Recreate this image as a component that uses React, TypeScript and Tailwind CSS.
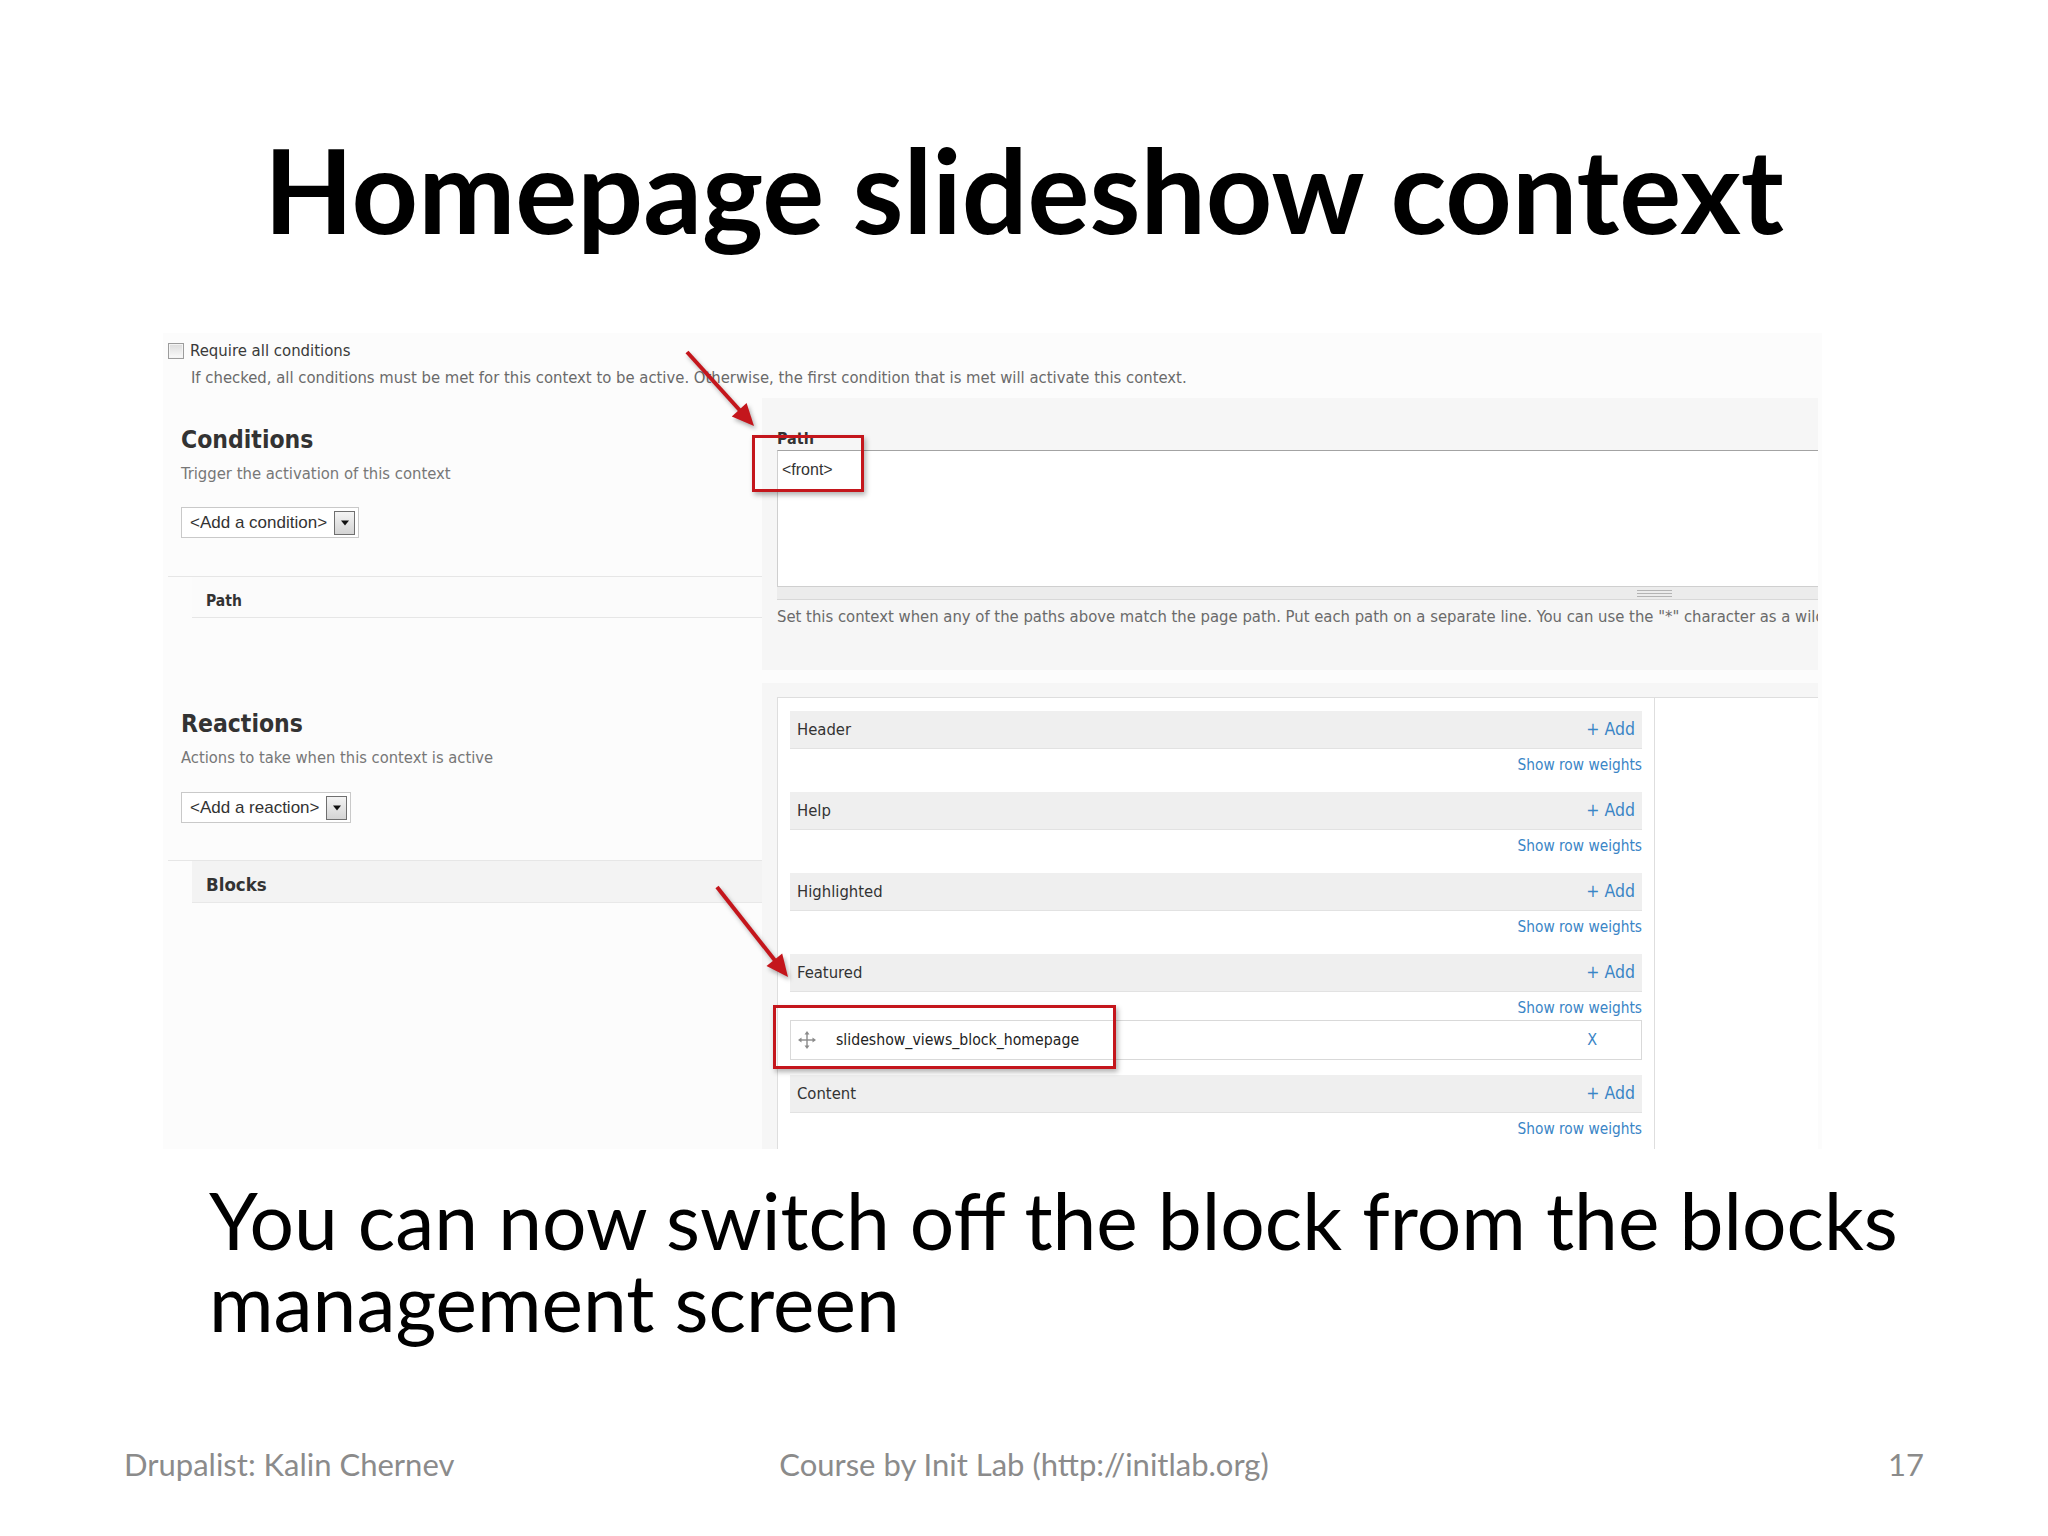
import React from "react";

const SS = "font-['DejaVu_Sans_Condensed','DejaVu_Sans',sans-serif]";
const AR = "font-['Liberation_Sans',Arial,sans-serif]";

function Checkbox() {
  return (
    <div className="h-[16px] w-[16px] border border-[#9c9c9c] bg-gradient-to-b from-[#dcdcdc] to-[#fafafa] shadow-[inset_0_0_0_1px_#f4f4f4]" />
  );
}

function SelectBox({ label, width }: { label: string; width: string }) {
  return (
    <div className={`flex h-[31px] items-center border border-[#c9c9c9] bg-white pl-[8px] pr-[3px] ${width}`}>
      <span className={`${AR} flex-1 text-[17px] leading-[18px] text-[#333]`}>{label}</span>
      <div className="flex h-[24px] w-[21px] items-center justify-center border border-[#6f6f6f] bg-gradient-to-b from-[#f4f4f4] to-[#d4d4d4]">
        <svg width="10" height="6" viewBox="0 0 10 6">
          <polygon points="1,0.5 9,0.5 5,5.5" fill="#111" />
        </svg>
      </div>
    </div>
  );
}

function DragIcon() {
  return (
    <svg width="20" height="20" viewBox="0 0 20 20" className="shrink-0">
      <g stroke="#8a8a8a" strokeWidth="1.4" fill="none">
        <line x1="10" y1="3" x2="10" y2="17" />
        <line x1="3" y1="10" x2="17" y2="10" />
      </g>
      <g fill="#8a8a8a">
        <polygon points="10,1 7.5,4.5 12.5,4.5" />
        <polygon points="10,19 7.5,15.5 12.5,15.5" />
        <polygon points="1,10 4.5,7.5 4.5,12.5" />
        <polygon points="19,10 15.5,7.5 15.5,12.5" />
      </g>
    </svg>
  );
}

function RegionBar({ label }: { label: string }) {
  return (
    <div className="flex h-[38px] items-center justify-between border-b border-[#e2e2e2] bg-[#efefef] pl-[7px] pr-[7px]">
      <span className="text-[16.5px] leading-[19px] text-[#333]">{label}</span>
      <span className="text-[17.5px] leading-[19px] text-[#3a85c6]">+ Add</span>
    </div>
  );
}

function Weights({ h }: { h: string }) {
  return (
    <div className={`${h} pt-[7px] text-right text-[15.3px] leading-[18px] text-[#3a85c6]`}>
      Show row weights
    </div>
  );
}

function Screenshot() {
  return (
    <div className={`${SS} ml-[163px] mt-[74px] flex h-[816px] w-[1659px] flex-col overflow-hidden bg-[#fcfcfc]`}>
      <div className="flex items-center pl-[5px] pt-[10px]">
        <Checkbox />
        <span className="ml-[6px] text-[16.6px] leading-[16px] text-[#3a3a3a]">Require all conditions</span>
      </div>
      <p className="mt-[10px] pl-[28px] text-[16.5px] leading-[18px] text-[#6a6a6a]">
        If checked, all conditions must be met for this context to be active. Otherwise, the first condition that is met will activate this context.
      </p>
      <div className="mt-[11px] flex flex-1">
        {/* Left column */}
        <div className="ml-[5px] w-[594px]">
          <h2 className="mt-[28px] pl-[13px] text-[24.5px] font-bold leading-[28px] text-[#333]">Conditions</h2>
          <p className="mt-[11px] pl-[13px] text-[16.5px] leading-[18px] text-[#777]">Trigger the activation of this context</p>
          <div className="mt-[24px] pl-[13px]">
            <SelectBox label="<Add a condition>" width="w-[178px]" />
          </div>
          <div className="mt-[38px] border-t border-[#e6e6e6]">
            <div className="ml-[24px] h-[41px] border-b border-[#e6e6e6] bg-[#fbfbfb] pl-[14px] pt-[15px] text-[15.5px] font-bold leading-[18px] text-[#333]">
              Path
            </div>
          </div>
          <h2 className="mt-[92px] pl-[13px] text-[24.5px] font-bold leading-[28px] text-[#333]">Reactions</h2>
          <p className="mt-[11px] pl-[13px] text-[16.4px] leading-[18px] text-[#777]">Actions to take when this context is active</p>
          <div className="mt-[25px] pl-[13px]">
            <SelectBox label="<Add a reaction>" width="w-[170px]" />
          </div>
          <div className="mt-[37px] border-t border-[#e6e6e6]">
            <div className="ml-[24px] h-[42px] border-b border-[#e8e8e8] bg-[#f3f3f3] pl-[14px] pt-[14px] text-[18.5px] font-bold leading-[20px] text-[#333]">
              Blocks
            </div>
          </div>
        </div>

        {/* Right column */}
        <div className="flex w-[1056px] flex-col">
          <div className="h-[272px] overflow-hidden bg-[#f6f6f6] pl-[15px]">
            <div className="pt-[32px] text-[16px] font-bold leading-[18px] text-[#333]">Path</div>
            <div className="mt-[2px] h-[137px] border-b border-l border-t border-b-[#cfcfcf] border-l-[#cfcfcf] border-t-[#a3a3a3] bg-white pl-[4px] pt-[7px]">
              <span className={`${AR} text-[16px] leading-[18px] text-[#333]`}>&lt;front&gt;</span>
            </div>
            <div className="flex h-[13px] flex-col gap-[2px] border-b border-[#d8d8d8] bg-[#ececec] pl-[860px] pt-[3px]">
              <div className="h-px w-[35px] bg-[#b4b4b4]" />
              <div className="h-px w-[35px] bg-[#b4b4b4]" />
              <div className="h-px w-[35px] bg-[#b4b4b4]" />
            </div>
            <p className="mt-[8px] whitespace-nowrap text-[16.5px] leading-[18px] text-[#6a6a6a]">
              Set this context when any of the paths above match the page path. Put each path on a separate line. You can use the "*" character as a wildcard.
            </p>
          </div>
          <div className="mt-[13px] flex flex-1 flex-col bg-[#f6f6f6] pl-[15px] pt-[14px]">
            <div className="flex flex-1 border-t border-[#dedede] bg-white">
              <div className="w-[878px] border-l border-r border-[#dedede] px-[12px] pt-[13px]">
                <RegionBar label="Header" />
                <Weights h="h-[43px]" />
                <RegionBar label="Help" />
                <Weights h="h-[43px]" />
                <RegionBar label="Highlighted" />
                <Weights h="h-[43px]" />
                <RegionBar label="Featured" />
                <Weights h="h-[28px]" />
                <div className="flex h-[40px] items-center border border-[#d9d9d9] bg-white pl-[6px]">
                  <DragIcon />
                  <span className="ml-[19px] flex-1 text-[15.7px] leading-[18px] text-[#222]">slideshow_views_block_homepage</span>
                  <span className="mr-[44px] text-[16px] leading-[18px] text-[#3a85c6]">X</span>
                </div>
                <div className="h-[15px]" />
                <RegionBar label="Content" />
                <Weights h="h-[43px]" />
              </div>
              <div className="flex-1" />
            </div>
          </div>
        </div>
      </div>
    </div>
  );
}

function Annotations() {
  return (
    <>
      <div className="pointer-events-none absolute left-[752px] top-[435px] h-[57px] w-[112px] border-[3px] border-[#c4161c] shadow-[2px_3px_5px_rgba(0,0,0,0.3)]" />
      <div className="pointer-events-none absolute left-[773px] top-[1005px] h-[64px] w-[343px] border-[3px] border-[#c4161c] shadow-[2px_3px_5px_rgba(0,0,0,0.3)]" />
      <svg
        className="pointer-events-none absolute left-0 top-0 drop-shadow-[2px_3px_2px_rgba(0,0,0,0.3)]"
        width="2048"
        height="1536"
        viewBox="0 0 2048 1536"
      >
        <line x1="687" y1="352" x2="740" y2="410.5" stroke="#c4161c" strokeWidth="4" />
        <polygon points="754,426 731.8,416.4 746.6,403" fill="#c4161c" />
        <line x1="717" y1="887" x2="775" y2="960.5" stroke="#c4161c" strokeWidth="4" />
        <polygon points="788,977 766.5,965.9 782.2,953.5" fill="#c4161c" />
      </svg>
    </>
  );
}

export default function App() {
  return (
    <div className="relative h-[1536px] w-[2048px] overflow-hidden bg-white font-['Lato',sans-serif]">
      <h1 className="pt-[120px] text-center text-[116px] font-bold leading-[1.2] text-black">
        Homepage slideshow context
      </h1>
      <Screenshot />
      <div className="ml-[209px] mt-[30px] text-[78.5px] leading-[82px] text-black">
        <p className="whitespace-nowrap">You can now switch off the block from the blocks</p>
        <p className="whitespace-nowrap">management screen</p>
      </div>
      <div className="mt-[103px] grid grid-cols-3 px-[124px] text-[31px] leading-[1.2] text-[#8b8b8b]">
        <div className="text-left">Drupalist: Kalin Chernev</div>
        <div className="text-center">Course by Init Lab (http://initlab.org)</div>
        <div className="text-right">17</div>
      </div>
      <Annotations />
    </div>
  );
}
